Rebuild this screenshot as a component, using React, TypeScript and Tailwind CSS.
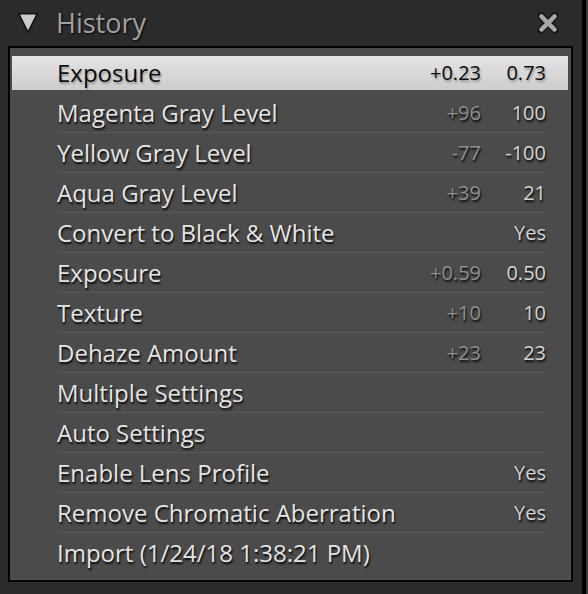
import React from "react";

type Step = { label: string; delta?: string; value?: string; selected?: boolean };

const steps: Step[] = [
  { label: "Exposure", delta: "+0.23", value: "0.73", selected: true },
  { label: "Magenta Gray Level", delta: "+96", value: "100" },
  { label: "Yellow Gray Level", delta: "-77", value: "-100" },
  { label: "Aqua Gray Level", delta: "+39", value: "21" },
  { label: "Convert to Black & White", value: "Yes" },
  { label: "Exposure", delta: "+0.59", value: "0.50" },
  { label: "Texture", delta: "+10", value: "10" },
  { label: "Dehaze Amount", delta: "+23", value: "23" },
  { label: "Multiple Settings" },
  { label: "Auto Settings" },
  { label: "Enable Lens Profile", value: "Yes" },
  { label: "Remove Chromatic Aberration", value: "Yes" },
  { label: "Import (1/24/18 1:38:21 PM)" },
];

function HistoryRow({ step, last }: { step: Step; last: boolean }) {
  const sel = step.selected;
  return (
    <div className="h-[40px] flex flex-col">
      <div
        className={
          sel
            ? "flex-1 mt-[3px] mb-[2px] flex items-center bg-gradient-to-b from-[#e4e4e4] to-[#cdcdcd] text-[#0d0d0d] [text-shadow:1px_2px_2px_rgba(0,0,0,0.3)]"
            : "flex-1 flex items-center text-[#e4e4e4] [text-shadow:1px_2px_2px_rgba(0,0,0,0.9)]"
        }
      >
        <span className="pl-[45px] flex-1 text-[24px] leading-[30px] whitespace-nowrap">{step.label}</span>
        <span
          className={`w-[80px] text-right text-[20px] leading-[30px] ${
            sel ? "text-[#0d0d0d]" : "text-[#8e8e8e]"
          }`}
        >
          {step.delta}
        </span>
        <span
          className={`w-[65px] text-right text-[20px] leading-[30px] ${
            sel ? "text-[#0d0d0d]" : "text-[#d4d4d4]"
          }`}
        >
          {step.value}
        </span>
        <span className="w-[22px]" />
      </div>
      {!last && !sel && <div className="h-px ml-[46px] mr-[21px] bg-[#585858]" />}
      {sel && <div className="h-px ml-[46px] mr-[21px] bg-[#4b4b4b]" />}
    </div>
  );
}

export default function App() {
  return (
    <div
      className="w-[588px] h-[594px] flex bg-[#2b2b2b] overflow-hidden"
      style={{ fontFamily: '"Open Sans", "Noto Sans", sans-serif' }}
    >
      <div className="w-[582px] flex flex-col">
        {/* Header */}
        <div className="h-[46px] flex items-center">
          <svg width="40" height="46" viewBox="0 0 40 46" className="ml-[2px] shrink-0">
            <polygon points="15.5,13 36.5,13 26,33.5" fill="#111" />
            <polygon points="18,14.5 34,14.5 26,30.5" fill="#cbcbcb" />
          </svg>
          <span className="ml-[14px] text-[27px] leading-[34px] text-[#a0a0a0] [text-shadow:1px_1px_2px_rgba(0,0,0,0.9)]">
            History
          </span>
          <div className="flex-1" />
          <svg width="24" height="24" viewBox="0 0 24 24" className="mr-[22px] shrink-0">
            <path d="M5 5 L19 19 M19 5 L5 19" stroke="#1a1a1a" strokeWidth="7.5" strokeLinecap="round" />
            <path d="M5.5 5.5 L18.5 18.5 M18.5 5.5 L5.5 18.5" stroke="#a8a8a8" strokeWidth="4.5" strokeLinecap="round" />
          </svg>
        </div>

        {/* Panel */}
        <div className="ml-[8px] w-[565px] h-[536px] border-2 border-black bg-[#4b4b4b]">
          <div className="h-full pt-[5px] pb-[6px] px-[2px] flex flex-col border-r border-b border-[#555]">
            {steps.map((s, i) => (
              <HistoryRow key={i} step={s} last={i === steps.length - 1} />
            ))}
          </div>
        </div>
      </div>
      <div className="w-[4px] bg-black" />
      <div className="flex-1 bg-[#3a3a3a]" />
    </div>
  );
}
